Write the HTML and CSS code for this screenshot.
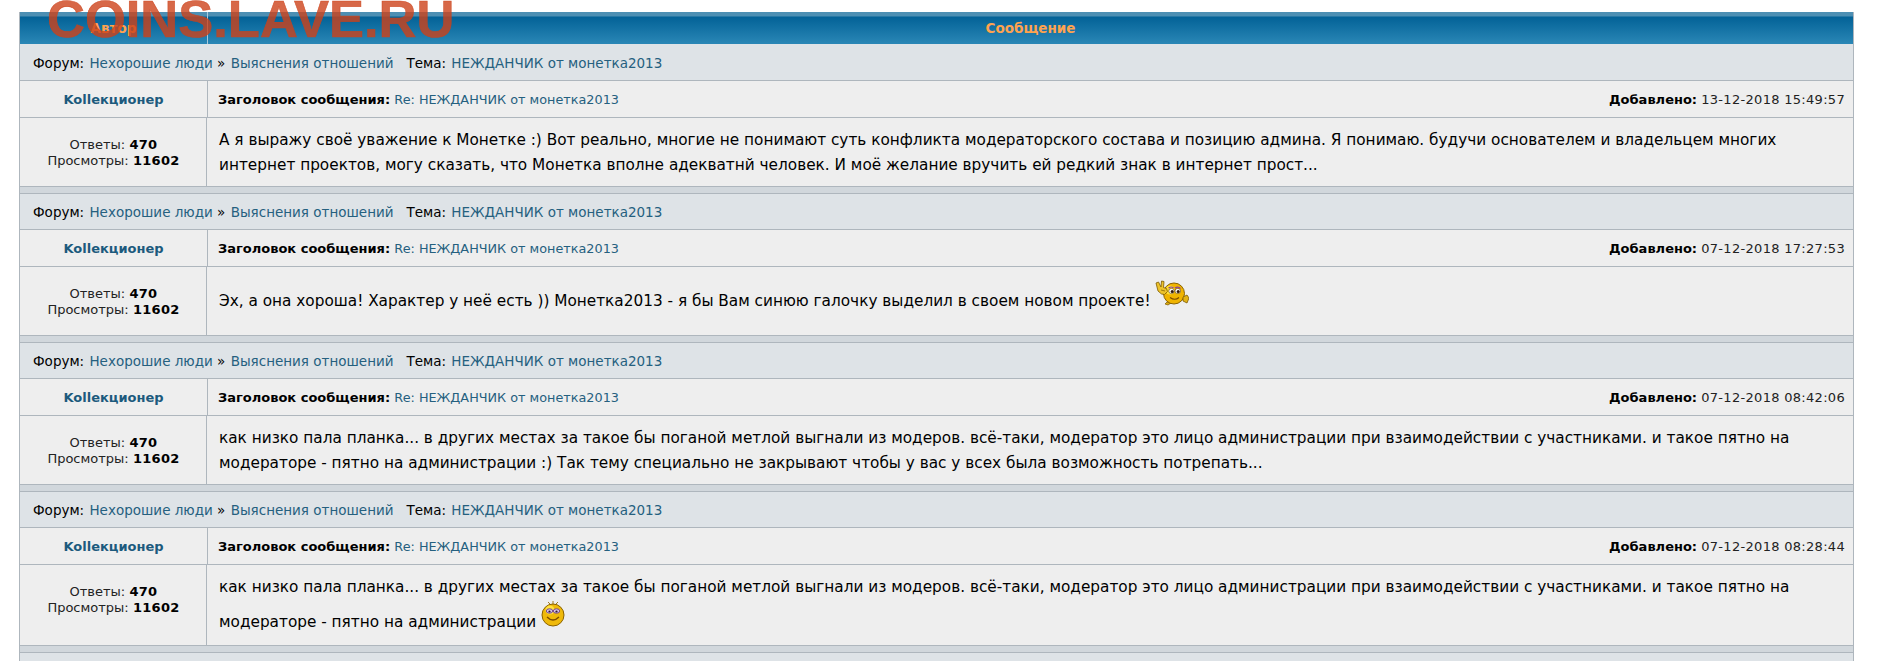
FILE: index.html
```html
<!DOCTYPE html>
<html lang="ru">
<head>
<meta charset="utf-8">
<title>Поиск</title>
<link rel="stylesheet" href="styles.css">
</head>
<body>
<div class="watermark">COINS.LAVE.RU</div>
<main class="board">
  <div class="head"><div class="head-author">Автор</div><div class="head-msg">Сообщение</div></div>

  <section class="post">
    <div class="crumbs">Форум: <a>Нехорошие люди</a> » <a>Выяснения отношений</a> &nbsp; Тема: <a>НЕЖДАНЧИК от монетка2013</a></div>
    <div class="row titlerow"><div class="side name">Kollекционер</div><div class="main titleline"><span><b>Заголовок сообщения:</b> <a>Re: НЕЖДАНЧИК от монетка2013</a></span><span class="when"><b>Добавлено:</b> <span class="date">13-12-2018 15:49:57</span></span></div></div>
    <div class="row bodyrow"><div class="side stats">Ответы: <b>470</b><br>Просмотры: <b>11602</b></div><div class="main text">А я выражу своё уважение к Монетке :) Вот реально, многие не понимают суть конфликта модераторского состава и позицию админа. Я понимаю. будучи основателем и владельцем многих<br>интернет проектов, могу сказать, что Монетка вполне адекватнй человек. И моё желание вручить ей редкий знак в интернет прост...</div></div>
  </section>

  <section class="post">
    <div class="crumbs">Форум: <a>Нехорошие люди</a> » <a>Выяснения отношений</a> &nbsp; Тема: <a>НЕЖДАНЧИК от монетка2013</a></div>
    <div class="row titlerow"><div class="side name">Kollекционер</div><div class="main titleline"><span><b>Заголовок сообщения:</b> <a>Re: НЕЖДАНЧИК от монетка2013</a></span><span class="when"><b>Добавлено:</b> <span class="date">07-12-2018 17:27:53</span></span></div></div>
    <div class="row bodyrow"><div class="side stats">Ответы: <b>470</b><br>Просмотры: <b>11602</b></div><div class="main text single">Эх, а она хороша! Характер у неё есть )) Монетка2013 - я бы Вам синюю галочку выделил в своем новом проекте! <svg class="smile smile-wave" viewBox="0 0 34 26" aria-hidden="true"><path d="M12 22l-2 2 3 1 3-2z" fill="#d9a90f" stroke="#7d5a00" stroke-width=".7"/><circle cx="19" cy="13.500" r="10.500" fill="#f0b400" stroke="#8a6200" stroke-width="1"/><circle cx="15" cy="10" r="4.500" fill="#ffe13a"/><ellipse cx="16.500" cy="11" rx="2.800" ry="2.600" fill="#fff" stroke="#5a3b00" stroke-width=".6"/><ellipse cx="22.800" cy="11" rx="2.800" ry="2.600" fill="#fff" stroke="#5a3b00" stroke-width=".6"/><circle cx="17.200" cy="11.500" r="1.500" fill="#30180c"/><circle cx="23.200" cy="11.500" r="1.500" fill="#30180c"/><path d="M13.500 8q3-2 5 0M20 8q3-2 5.500 .5" fill="none" stroke="#8a3f9a" stroke-width="1.200"/><path d="M15 17.500q5 3.500 9 0" fill="none" stroke="#7a4a00" stroke-width="1.200"/><path d="M3 11l-2-8 2.500-1 2.500 5 .5-6 2.500 .5-.5 6 3 1 1 3-3 3-3-.5z" fill="#edc32c" stroke="#7d5a00" stroke-width=".8"/><path d="M6 10l4 1" stroke="#7d5a00" stroke-width=".7"/><path d="M28 17l4-2 2 3-2 5-4-2z" fill="#e3b316" stroke="#7d5a00" stroke-width=".8"/></svg></div></div>
  </section>

  <section class="post">
    <div class="crumbs">Форум: <a>Нехорошие люди</a> » <a>Выяснения отношений</a> &nbsp; Тема: <a>НЕЖДАНЧИК от монетка2013</a></div>
    <div class="row titlerow"><div class="side name">Kollекционер</div><div class="main titleline"><span><b>Заголовок сообщения:</b> <a>Re: НЕЖДАНЧИК от монетка2013</a></span><span class="when"><b>Добавлено:</b> <span class="date">07-12-2018 08:42:06</span></span></div></div>
    <div class="row bodyrow"><div class="side stats">Ответы: <b>470</b><br>Просмотры: <b>11602</b></div><div class="main text">как низко пала планка... в других местах за такое бы поганой метлой выгнали из модеров. всё-таки, модератор это лицо администрации при взаимодействии с участниками. и такое пятно на<br>модераторе - пятно на администрации :) Так тему специально не закрывают чтобы у вас у всех была возможность потрепать...</div></div>
  </section>

  <section class="post">
    <div class="crumbs">Форум: <a>Нехорошие люди</a> » <a>Выяснения отношений</a> &nbsp; Тема: <a>НЕЖДАНЧИК от монетка2013</a></div>
    <div class="row titlerow"><div class="side name">Kollекционер</div><div class="main titleline"><span><b>Заголовок сообщения:</b> <a>Re: НЕЖДАНЧИК от монетка2013</a></span><span class="when"><b>Добавлено:</b> <span class="date">07-12-2018 08:28:44</span></span></div></div>
    <div class="row bodyrow tall"><div class="side stats">Ответы: <b>470</b><br>Просмотры: <b>11602</b></div><div class="main text">как низко пала планка... в других местах за такое бы поганой метлой выгнали из модеров. всё-таки, модератор это лицо администрации при взаимодействии с участниками. и такое пятно на<br>модераторе - пятно на администрации <svg class="smile smile-round" viewBox="0 0 24 27" aria-hidden="true"><path d="M10 5L7 2M12 5V1M14 5l3-3" stroke="#a07a20" stroke-width="1" fill="none"/><circle cx="12" cy="15" r="11" fill="#efb90a" stroke="#8a6200" stroke-width="1"/><circle cx="9" cy="10" r="4.500" fill="#ffe13f"/><ellipse cx="8.500" cy="11" rx="3.200" ry="2.200" fill="#d9c6e6" stroke="#6a3a8a" stroke-width=".9"/><ellipse cx="15.500" cy="11" rx="3.200" ry="2.200" fill="#d9c6e6" stroke="#6a3a8a" stroke-width=".9"/><circle cx="8.500" cy="11.500" r="1.100" fill="#301a30"/><circle cx="15.500" cy="11.500" r="1.100" fill="#301a30"/><path d="M6 17q6 6 12 0" fill="none" stroke="#7a4a00" stroke-width="1.300"/></svg></div></div>
  </section>

  <section class="post">
    <div class="crumbs"></div>
  </section>
</main>
</body>
</html>
```

FILE: styles.css
```css
html, body { margin: 0; padding: 0; background: #fff; height: 661px; overflow: hidden; }
body { font-family: "DejaVu Sans", Verdana, sans-serif; color: #000; position: relative; }
a { color: #25607f; }

.watermark {
  position: absolute; left: 47px; top: -11px;
  font: bold 52.500px/60px "Liberation Sans", Arial, sans-serif;
  color: rgba(205, 66, 26, .8);
  -webkit-text-stroke: .6px rgba(205, 66, 26, .8);
  z-index: 2;
}

.board { margin: 12px 26px 0 19px; border-left: 1px solid #aeb6bd; border-right: 1px solid #aeb6bd; }

.head {
  display: flex; height: 32px;
  background: linear-gradient(#4d8fb3 0, #4d8fb3 4px, #036297 5px, #2a87b6 100%);
  color: #ffa34f; font-weight: bold; font-size: 13.500px; line-height: 33px; text-align: center;
}
.head-author { width: 187px; flex: none; border-right: 1px solid #a9c9db; }
.head-msg { flex: 1; }

.post { background: #d1d7dc; padding-bottom: 6px; }
.post:last-child { padding: 0; }

.crumbs {
  height: 36px; background: #dee3e7; border-bottom: 1px solid #aeb6bd;
  padding-left: 13px; font-size: 13.500px; line-height: 38px;
  box-sizing: content-box;
}
.crumbs a { margin-left: 1px; }
.post + .post .crumbs { border-top: 1px solid #aeb6bd; height: 35px; line-height: 36px; }

.row { display: flex; background: #eee; border-bottom: 1px solid #aeb6bd; box-sizing: border-box; }
.titlerow { height: 37px; font-size: 13px; line-height: 38px; }
.titleline a { font-size: 12.800px; }
.bodyrow { height: 69px; }
.tall { height: 81px; }

.side { width: 187px; flex: none; text-align: center; border-right: 1px solid #aeb6bd; }
.main { flex: 1; min-width: 0; }

.name { font-weight: bold; color: #1c5a7d; font-size: 13px; }
.titleline { display: flex; justify-content: space-between; padding: 0 8px 0 10px; }
.date { letter-spacing: .3px; color: #222; }
.stats { font-size: 13px; line-height: 16px; padding-top: 19px; padding-left: 1px; box-sizing: border-box; color: #222; }
.stats b { color: #000; letter-spacing: .3px; }

.text { font-size: 15.300px; line-height: 25px; padding: 10px 10px 0 12px; white-space: nowrap; }
.single { padding-top: 13px; }
.smile { display: inline-block; vertical-align: baseline; }
.smile-wave { width: 34px; height: 26px; }
.smile-round { width: 24px; height: 27px; }
```
